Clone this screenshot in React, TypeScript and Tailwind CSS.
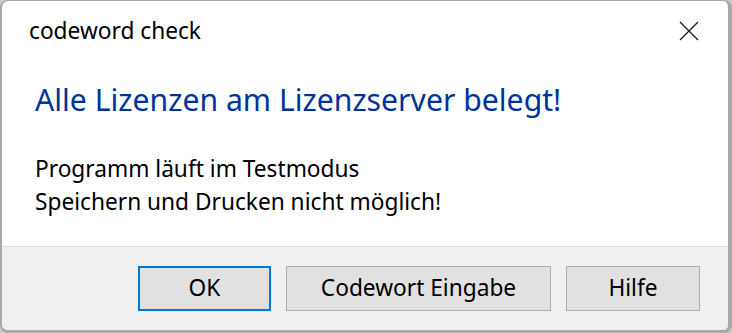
import React from 'react';

const font = { fontFamily: '"Segoe UI", "Noto Sans", "Open Sans", sans-serif' };

const CloseIcon = () => (
  <svg width="20" height="20" viewBox="0 0 20 20" className="block">
    <path d="M1 1 L19 19 M19 1 L1 19" stroke="#1a1a1a" strokeWidth="1.3" fill="none" />
  </svg>
);

const DialogButton = ({ label, width, primary }: { label: string; width: string; primary?: boolean }) => (
  <button
    className={`${width} h-[45px] bg-[#e1e1e1] text-[22.7px] text-black flex items-center justify-center ${
      primary ? 'border-2 border-[#0078d7]' : 'border border-[#adadad]'
    }`}
  >
    {label}
  </button>
);

export default function App() {
  return (
    <div className="w-[732px] h-[333px] bg-[#c9c9c9]" style={font}>
      <div className="w-full h-full flex flex-col rounded-[8px] overflow-hidden border-t border-l-2 border-r-4 border-b-[3px] border-[#a8a8a8]">
        <div className="flex-1 bg-white flex flex-col">
          <div className="flex items-center justify-between h-[60px] pl-[27px] pr-[29px]">
            <span className="text-[22.7px] text-black">codeword check</span>
            <CloseIcon />
          </div>
          <div className="pl-[33px] pt-[19px] text-[30.2px] text-[#003399] leading-[40px]">
            Alle Lizenzen am Lizenzserver belegt!
          </div>
          <div className="pl-[33px] pt-[32px] text-[22.7px] text-black leading-[33px]">
            <div>Programm läuft im Testmodus</div>
            <div>Speichern und Drucken nicht möglich!</div>
          </div>
        </div>
        <div className="h-[84px] bg-[#f0f0f0] border-t border-[#dfdfdf] flex items-center justify-end gap-[15px] pr-[28px]">
          <DialogButton label="OK" width="w-[133px]" primary />
          <DialogButton label="Codewort Eingabe" width="w-[265px]" />
          <DialogButton label="Hilfe" width="w-[134px]" />
        </div>
      </div>
    </div>
  );
}
